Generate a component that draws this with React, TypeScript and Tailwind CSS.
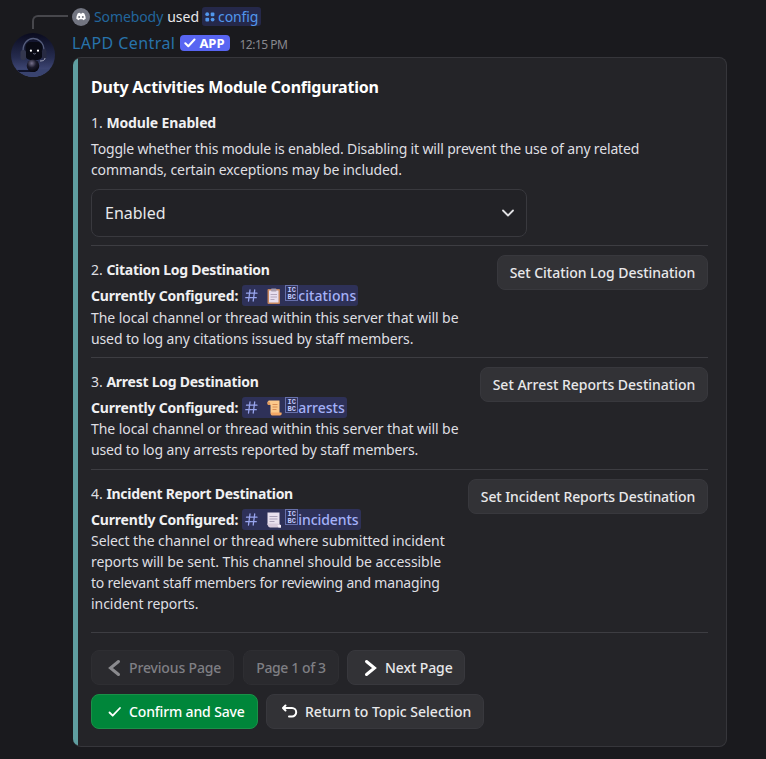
import type { ReactNode } from "react";

const BODY = "text-[14px] leading-[21px] text-[#dfdfe2]";

function ClipboardIcon() {
  return (
    <svg width="14" height="16" viewBox="0 0 14 16" className="shrink-0">
      <rect x="0.5" y="1" width="12.5" height="15" rx="1" fill="#c6865f" />
      <rect x="2" y="2.5" width="9.5" height="12" fill="#e8dff0" />
      <rect x="4" y="0.5" width="5.5" height="3" rx="0.8" fill="#a79bab" />
      <path d="M3.5 6.5h6.5M3.5 9h6.5M3.5 11.5h4" stroke="#b3a6bd" strokeWidth="1" />
    </svg>
  );
}

function ScrollIcon() {
  return (
    <svg width="15" height="16" viewBox="0 0 15 16" className="shrink-0">
      <path d="M1.800 .5h10.700v13H3.500V5H1.500Q-.5 2 1.800 .5Z" fill="#fbc98c" />
      <path d="M1 1.500Q3 1 3.500 5H1Q-.3 3 1 1.500Z" fill="#e09a5c" />
      <path d="M4 12.500h10.500q.8 3-1.500 3H5Q3 15 4 12.500Z" fill="#f3a765" />
      <path d="M5.500 4.500h5M5.500 7h5M5.500 9.500h4" stroke="#d98e55" strokeWidth="1" />
    </svg>
  );
}

function PageIcon() {
  return (
    <svg width="15" height="16" viewBox="0 0 15 16" className="shrink-0">
      <path d="M.5 .5h12V13H.5Z" fill="#e9e1ee" />
      <path d="M.5 11.500h10l3.500 1.500v2.500H3q-2.500-.5-2.500-4Z" fill="#d8cbdc" />
      <path d="M10.500 13H14v2.500h-2.500Z" fill="#f6effa" />
      <path d="M2.500 4.500h8M2.500 7h8M2.500 9.500h5" stroke="#aaa1b8" strokeWidth="1" />
    </svg>
  );
}

function HashIcon() {
  return (
    <svg width="13" height="13" viewBox="0 0 13 13" className="shrink-0" fill="none" stroke="#98a5ee" strokeWidth="1.300" strokeLinecap="round">
      <path d="M5 1 3.500 12M9.700 1 8.200 12M1.500 4.200h10.500M.8 8.700h10.500" />
    </svg>
  );
}

function CodepointBox() {
  return (
    <span className="flex h-[16px] w-[13px] shrink-0 flex-col items-center justify-center border border-[#6770ab] pt-px font-['Liberation_Mono',monospace] text-[7px] leading-[7px] font-bold text-[#c3cbfd]">
      <span>IC</span>
      <span>BC</span>
    </span>
  );
}

function Channel({ icon, name, tracking }: { icon: ReactNode; name: string; tracking: string }) {
  return (
    <span className="ml-[4px] flex h-[21px] items-center rounded-[3px] bg-[#2e3158] pr-[2px] pl-[3px] text-[#a5b1f8]">
      <HashIcon />
      <span className="ml-[9px] flex w-[15px]">{icon}</span>
      <span className="mb-[5px] ml-[3px] flex">
        <CodepointBox />
      </span>
      <span className={`font-medium ${tracking}`}>{name}</span>
    </span>
  );
}

function Button({ children, className }: { children: ReactNode; className: string }) {
  return (
    <button className={`flex h-[35px] shrink-0 items-center rounded-lg border text-[14px] font-medium whitespace-nowrap ${className}`}>
      {children}
    </button>
  );
}

const GREY = "border-[#38383d] bg-[#323236] text-[#e8e8ea]";
const DIM = "border-[#2e2e32] bg-[#2a2a2e] text-[#7f7f84]";

type Line = { text: string; tracking: string };

type SectionProps = {
  num: string;
  title: string;
  titleTracking: string;
  icon: ReactNode;
  channel: string;
  channelTracking: string;
  lines: Line[];
  linesClass: string;
  action: string;
  actionClass: string;
};

function Section({ num, title, titleTracking, icon, channel, channelTracking, lines, linesClass, action, actionClass }: SectionProps) {
  return (
    <section className="flex justify-between border-t border-[#3d3d42] pt-[9px]">
      <div className="pt-[4px]">
        <h2 className={`${BODY} whitespace-pre`}>
          {num} <b className={`font-bold text-[#f0f0f2] ${titleTracking}`}>{title}</b>
        </h2>
        <div className={`${BODY} mt-[5px] flex h-[21px] items-center whitespace-nowrap`}>
          <b className="font-bold tracking-[-0.19px] text-[#f0f0f2]">Currently Configured:</b>
          <Channel icon={icon} name={channel} tracking={channelTracking} />
        </div>
        <div className={linesClass}>
          {lines.map((line) => (
            <p key={line.text} className={`${BODY} whitespace-nowrap ${line.tracking}`}>{line.text}</p>
          ))}
        </div>
      </div>
      <Button className={`${GREY} justify-center ${actionClass}`}>{action}</Button>
    </section>
  );
}

function Avatar() {
  return (
    <svg width="44" height="44" viewBox="0 0 44 44">
      <defs>
        <linearGradient id="sky" x1="0" y1="0" x2="0" y2="1">
          <stop offset="0" stopColor="#0a0b1e" />
          <stop offset="0.55" stopColor="#252b4e" />
          <stop offset="1" stopColor="#4d578c" />
        </linearGradient>
        <radialGradient id="ball" cx=".4" cy=".3" r=".7">
          <stop offset="0" stopColor="#77718d" />
          <stop offset=".5" stopColor="#1b1a2b" />
          <stop offset="1" stopColor="#07070f" />
        </radialGradient>
        <clipPath id="disc"><circle cx="22" cy="22" r="22" /></clipPath>
      </defs>
      <g clipPath="url(#disc)">
        <rect width="44" height="44" fill="url(#sky)" />
        <path d="M0 36h44v8H0Z" fill="#39436f" />
        <path d="M4 37h20v2H4Z" fill="#10132a" />
        <path d="M12 18C12 1.500 32 1.500 33 17" fill="none" stroke="#555d7c" strokeWidth="1.300" />
        <rect x="14.500" y="9" width="17" height="18" rx="5" fill="#090a14" />
        <rect x="9.500" y="17" width="5.500" height="10" rx="2.500" fill="#34374e" />
        <rect x="31" y="16" width="4.500" height="10" rx="2.200" fill="#272a42" />
        <path d="M34 25q0 3-5 3" fill="none" stroke="#a3a7bd" strokeWidth="1" />
        <circle cx="19.900" cy="17.700" r="1.100" fill="#fff" />
        <circle cx="27" cy="17.700" r="1.100" fill="#fff" />
        <path d="M22.300 20.500q1.200 1 2.400 0" fill="none" stroke="#9699b4" strokeWidth=".8" />
        <circle cx="22" cy="32.800" r="6.300" fill="url(#ball)" />
      </g>
    </svg>
  );
}

export default function App() {
  return (
    <main className="h-[759px] w-[766px] overflow-hidden bg-[#1a1a1e] font-['Noto_Sans',sans-serif]">
      <div className="flex">
        <div className="flex w-[72px] shrink-0 flex-col">
          <div className="mt-[15px] ml-[32px] h-[14px] w-[36px] rounded-tl-[6px] border-t-2 border-l-2 border-[#47474c]" />
          <div className="mt-[4px] ml-[11px]">
            <Avatar />
          </div>
        </div>
        <div className="w-[655px]">
          <div className="flex h-[33px] items-center text-[14px] leading-[20px]">
            <svg width="18" height="18" viewBox="0 0 18 18">
              <circle cx="9" cy="9" r="9" fill="#727581" />
              <path d="M5.700 5.500q1-.6 2-.7l.4.7h1.800l.4-.7q1 .1 2 .7 1.400 2.400 1.400 5.300-1 1-2.500 1.400l-.7-1q-1.500.3-3 0l-.7 1q-1.500-.4-2.500-1.400 0-2.900 1.400-5.300Z" fill="#fff" />
              <circle cx="7.200" cy="9.100" r="1" fill="#727581" />
              <circle cx="10.800" cy="9.100" r="1" fill="#727581" />
            </svg>
            <span className="ml-[4px] tracking-[-0.1px] text-[#22669c]">Somebody</span>
            <span className="ml-[4px] text-[#e8e8ea]">used</span>
            <span className="ml-[3px] flex h-[19px] items-center rounded-[3px] bg-[#25284a] pr-[3px] pl-[3px] tracking-[-0.1px] text-[#5197ed]">
              <svg width="10" height="10" viewBox="0 0 10 10" fill="#5197ed" className="mr-[3px]">
                <circle cx="2.200" cy="2.200" r="1.900" />
                <rect x="5.700" y=".5" width="3.700" height="3.700" rx="1" />
                <rect x=".4" y="5.700" width="3.700" height="3.700" rx="1" />
                <circle cx="7.600" cy="7.600" r="1.900" />
              </svg>
              config
            </span>
          </div>
          <div className="flex h-[20px] items-center">
            <span className="text-[16px] leading-[20px] tracking-[0.42px] text-[#2873ab]">LAPD Central</span>
            <span className="ml-[5px] flex h-[16px] w-[50px] items-center rounded-[4px] bg-[#5865f2] pl-[4px] text-[13px] leading-[16px] font-bold text-white">
              <svg width="12" height="10" viewBox="0 0 12 10" className="mr-[3px]" fill="none" stroke="white" strokeWidth="2" strokeLinecap="round" strokeLinejoin="round">
                <path d="m1.300 5.200 3 3L10.500 1.500" />
              </svg>
              <span>APP</span>
            </span>
            <span className="mt-[3px] ml-[9px] text-[12px] leading-[16px] tracking-[-0.48px] text-[#88888e]">12:15 PM</span>
          </div>
          <div className="mt-[4px] ml-px flex h-[690px] w-[654px] overflow-hidden rounded-[8px] border border-l-0 border-[#36363b] bg-[#242428]">
            <div className="w-[5px] shrink-0 bg-[#5f9ea0]" />
            <div className="ml-[13px] flex w-[617px] flex-col">
              <h1 className="mt-[18px] text-[16px] leading-[22px] font-bold tracking-[-0.22px] text-white">Duty Activities Module Configuration</h1>
              <h2 className={`${BODY} mt-[14px]`}>
                1. <b className="font-bold tracking-[-0.14px] text-[#f0f0f2]">Module Enabled</b>
              </h2>
              <div className={`${BODY} mt-[5px] whitespace-nowrap`}>
                <p className="tracking-[-0.16px]">Toggle whether this module is enabled. Disabling it will prevent the use of any related</p>
                <p className="tracking-[-0.11px]">commands, certain exceptions may be included.</p>
              </div>
              <div className="mt-[9px] flex h-[48px] w-[436px] shrink-0 items-center justify-between rounded-lg border border-[#39393e] bg-[#222226] pr-[11px] pl-[13px] text-[16px] text-[#e8e8ea]">
                <span>Enabled</span>
                <svg width="14" height="10" viewBox="0 0 14 10" fill="none" stroke="#e0e0e3" strokeWidth="1.800" strokeLinecap="round" strokeLinejoin="round">
                  <path d="m2 2.500 5 5L12 2.500" />
                </svg>
              </div>
              <div className="mt-[8px] h-[112px]">
                <Section
                  num="2."
                  title="Citation Log Destination"
                  titleTracking="tracking-[-0.28px]"
                  icon={<ClipboardIcon />}
                  channel="citations"
                  channelTracking="tracking-[0.1px]"
                  lines={[
                    { text: "The local channel or thread within this server that will be", tracking: "tracking-[-0.07px]" },
                    { text: "used to log any citations issued by staff members.", tracking: "tracking-[-0.12px]" },
                  ]}
                  linesClass="mt-px"
                  action="Set Citation Log Destination"
                  actionClass="w-[211px] tracking-[-0.04px]"
                />
              </div>
              <div className="h-[112px]">
                <Section
                  num="3."
                  title="Arrest Log Destination"
                  titleTracking="tracking-[-0.25px]"
                  icon={<ScrollIcon />}
                  channel="arrests"
                  channelTracking="tracking-normal"
                  lines={[
                    { text: "The local channel or thread within this server that will be", tracking: "tracking-[-0.07px]" },
                    { text: "used to log any arrests reported by staff members.", tracking: "tracking-[-0.13px]" },
                  ]}
                  linesClass=""
                  action="Set Arrest Reports Destination"
                  actionClass="w-[228px]"
                />
              </div>
              <div className="h-[163px]">
                <Section
                  num="4."
                  title="Incident Report Destination"
                  titleTracking="tracking-[-0.3px]"
                  icon={<PageIcon />}
                  channel="incidents"
                  channelTracking="tracking-[-0.05px]"
                  lines={[
                    { text: "Select the channel or thread where submitted incident", tracking: "tracking-[-0.06px]" },
                    { text: "reports will be sent. This channel should be accessible", tracking: "tracking-[-0.07px]" },
                    { text: "to relevant staff members for reviewing and managing", tracking: "tracking-[-0.2px]" },
                    { text: "incident reports.", tracking: "tracking-[-0.05px]" },
                  ]}
                  linesClass=""
                  action="Set Incident Reports Destination"
                  actionClass="w-[240px] tracking-[-0.08px]"
                />
              </div>
              <div className="flex gap-[8px] border-t border-[#3d3d42] pt-[17px]">
                <Button className={`${DIM} mr-px w-[143px] pl-[15px]`}>
                  <svg width="14" height="18" viewBox="0 0 14 18" className="mr-[8px]" fill="none" stroke="#8a8a8e" strokeWidth="3" strokeLinecap="round">
                    <path d="M11.500 2.500 3.500 9 11.500 15.500" />
                  </svg>
                  <span className="tracking-[-0.15px]">Previous Page</span>
                </Button>
                <Button className={`${DIM} w-[96px] justify-center tracking-[-0.4px]`}>Page 1 of 3</Button>
                <Button className={`${GREY} w-[118px] pl-[16px]`}>
                  <svg width="14" height="18" viewBox="0 0 14 18" className="mr-[7px]" fill="none" stroke="white" strokeWidth="3" strokeLinecap="round">
                    <path d="M2.500 2.500 10.500 9 2.500 15.500" />
                  </svg>
                  <span className="tracking-[-0.1px]">Next Page</span>
                </Button>
              </div>
              <div className="mt-[9px] flex gap-[8px]">
                <Button className="w-[167px] border-[#1a9148] bg-[#00863a] pl-[16px] text-white">
                  <svg width="14" height="12" viewBox="0 0 14 12" className="mr-[7px]" fill="none" stroke="white" strokeWidth="1.800" strokeLinecap="round" strokeLinejoin="round">
                    <path d="m1.500 6.500 3.200 3.200L12 2" />
                  </svg>
                  <span className="tracking-[-0.15px]">Confirm and Save</span>
                </Button>
                <Button className={`${GREY} w-[218px] pl-[14px]`}>
                  <svg width="17" height="15" viewBox="0 0 17 15" className="mr-[7px]" fill="none" stroke="white" strokeWidth="2" strokeLinecap="round" strokeLinejoin="round">
                    <path d="M4.500 1.500 2 4l2.500 2.500M2.500 4H11a4.200 4.200 0 0 1 0 8.400H8" />
                  </svg>
                  <span>Return to Topic Selection</span>
                </Button>
              </div>
            </div>
          </div>
        </div>
      </div>
    </main>
  );
}
